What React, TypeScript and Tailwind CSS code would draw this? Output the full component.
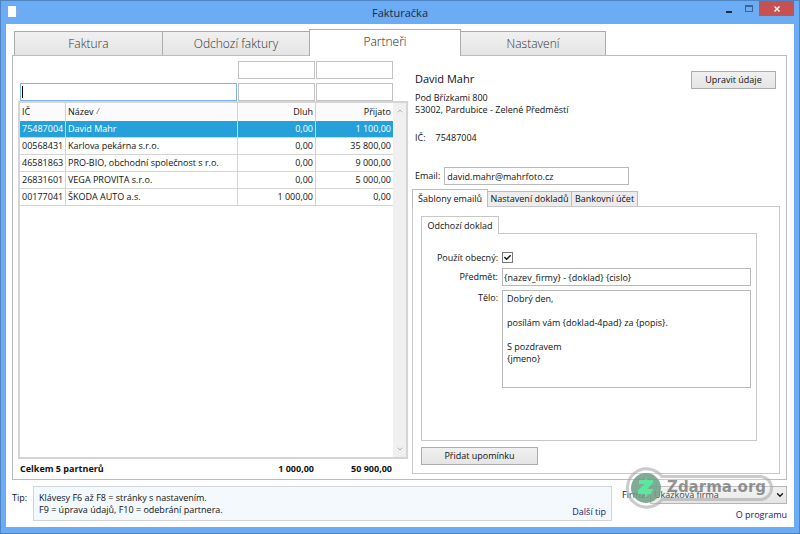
import React from "react";
import { FaCheck } from "react-icons/fa";
import { LuChevronDown, LuChevronUp } from "react-icons/lu";

const partners = [
  { ic: "75487004", name: "David Mahr", debt: "0,00", received: "1 100,00" },
  { ic: "00568431", name: "Karlova pekárna s.r.o.", debt: "0,00", received: "35 800,00" },
  { ic: "46581863", name: "PRO-BIO, obchodní společnost s r.o.", debt: "0,00", received: "9 000,00" },
  { ic: "26831601", name: "VEGA PROVITA s.r.o.", debt: "0,00", received: "5 000,00" },
  { ic: "00177041", name: "ŠKODA AUTO a.s.", debt: "1 000,00", received: "0,00" },
];

const emailBody = `Dobrý den,

posílám vám {doklad-4pad} za {popis}.

S pozdravem
{jmeno}`;

const TitleBar = () => {
  return (
    <header className="relative flex h-[23px] items-center justify-center">
      {/* Document icon */}
      <svg className="absolute left-0.5 top-[5px] h-3 w-3" viewBox="0 0 12 12">
        <rect width="8" height="11" fill="#fff" />
        <path d="M9.5 2.5v6M8.5 4h3M8.5 6.5h2.5" stroke="#a9a3b4" strokeWidth="1" fill="none" />
      </svg>
      <h1 className="text-[11px] leading-3 text-[#1c2a3f]">Fakturačka</h1>
      <div className="absolute right-0 top-0 flex">
        <button aria-label="Minimalizovat" className="flex h-[15px] w-5 items-end justify-center pb-[3px]">
          <span className="h-0.5 w-1.5 bg-[#1f2c40]" />
        </button>
        <button aria-label="Maximalizovat" className="flex h-[15px] w-5 items-center justify-center">
          <span className="h-[7px] w-2 border border-t-2 border-[#3f6390]" />
        </button>
        <button aria-label="Zavřít" className="flex h-[15px] w-[35px] items-center justify-center bg-[#c75050]">
          <svg className="h-1.5 w-1.5" viewBox="0 0 6 6">
            <path d="M.5.5l5 5M5.5.5l-5 5" stroke="#fff" strokeWidth="1.4" />
          </svg>
        </button>
      </div>
    </header>
  );
};

const MainTabs = () => {
  const tab = "h-6 border border-b-0 border-[#acacac] bg-gradient-to-b from-[#f0f0f0] to-[#e5e5e5] text-[#333]";
  return (
    <nav className="flex items-end pl-0.5 text-xs font-light">
      <button className={`${tab} w-[148px] border-r-0`}>Faktura</button>
      <button className={`${tab} w-[147px] border-r-0`}>Odchozí faktury</button>
      <button className="z-10 -mb-px h-[27px] w-[152px] border border-b-0 border-[#acacac] bg-white pb-0.5 text-[#222]">
        Partneři
      </button>
      <button className={`${tab} w-[145px] border-l-0`}>Nastavení</button>
    </nav>
  );
};

const PartnerList = () => {
  const box = "h-[18px] border border-[#c3c3c3] bg-white px-1 outline-none";
  const cell = "border-b border-r border-[#d4d4d4] px-0.5";
  return (
    <section className="flex w-[390px] shrink-0 flex-col">
      <div className="grid grid-cols-[217px_77px_77px] gap-x-px gap-y-1 pl-0.5 pt-[5px]">
        <input aria-label="Dluh od" className={`${box} col-start-2`} />
        <input aria-label="Přijato od" className={box} />
        <div className="relative">
          <input aria-label="Hledat" className="h-[18px] w-full border border-[#7eb4ea] bg-white px-1 outline-none" />
          {/* Text cursor */}
          <span className="absolute left-0.5 top-[3px] h-3 w-px bg-black" />
        </div>
        <input aria-label="Dluh do" className={box} />
        <input aria-label="Přijato do" className={box} />
      </div>

      <div className="flex flex-1 border-2 border-[#d5d5d5]">
        <div className="flex-1">
          <table className="w-full table-fixed border-separate border-spacing-0">
            <thead>
              <tr className="h-[18px] bg-[#fbfbfb] text-left">
                <th className="w-[46px] border-r border-[#d4d4d4] px-0.5 font-medium">IČ</th>
                <th className="w-[172px] border-r border-[#d4d4d4] px-0.5 font-medium">
                  Název
                  <svg className="mb-1 ml-0.5 inline h-1.5 w-1" viewBox="0 0 4 6">
                    <path d="M.5 6L3.5 0" stroke="#777" strokeWidth=".8" />
                  </svg>
                </th>
                <th className="w-[78px] border-r border-[#d4d4d4] px-0.5 text-right font-medium">Dluh</th>
                <th className="px-0.5 text-right font-medium">Přijato</th>
              </tr>
            </thead>
            <tbody>
              {partners.map((p, i) => (
                <tr key={p.ic} className={i === 0 ? "h-[17px] bg-[#26a0da] text-white" : "h-[17px]"}>
                  <td className={cell}>{p.ic}</td>
                  <td className={cell}>{p.name}</td>
                  <td className={`${cell} text-right`}>{p.debt}</td>
                  <td className="border-b border-[#d4d4d4] px-0.5 text-right">{p.received}</td>
                </tr>
              ))}
            </tbody>
          </table>
        </div>
        {/* Scrollbar */}
        <div className="flex w-[13px] flex-col items-center justify-between bg-[#f0f0f0] py-1 text-[#b0b0b0]">
          <LuChevronUp className="h-2 w-2" strokeWidth={3} />
          <LuChevronDown className="h-2 w-2" strokeWidth={3} />
        </div>
      </div>

      <div className="grid h-5 grid-cols-[216px_78px_78px] items-center pl-0.5 font-bold">
        <span>Celkem 5 partnerů</span>
        <span className="text-right">1 000,00</span>
        <span className="text-right">50 900,00</span>
      </div>
    </section>
  );
};

const EmailTemplates = () => {
  const field = "border border-[#b9b9b9] bg-white outline-none";
  return (
    <div className="flex flex-1 flex-col">
      <div className="flex items-end">
        <button className="z-10 -mb-px h-[18px] w-[76px] border border-b-0 border-[#bcbcbc] bg-white">Šablony emailů</button>
        <button className="h-[15px] w-[84px] border border-b-0 border-l-0 border-[#bcbcbc] bg-[#ececec]">Nastavení dokladů</button>
        <button className="h-[15px] w-[66px] border border-b-0 border-l-0 border-[#bcbcbc] bg-[#ececec]">Bankovní účet</button>
      </div>
      <div className="flex flex-1 flex-col border border-[#c8c8c8] pb-2 pl-2 pt-[9px]">
        <button className="z-10 -mb-px h-[18px] w-[78px] border border-b-0 border-[#c8c8c8] bg-white">Odchozí doklad</button>
        <div className="mr-[22px] flex-1 border border-[#c8c8c8] pr-[5px] pt-[18px]">
          <div className="grid grid-cols-[76px_1fr] gap-x-1 gap-y-1 text-right">
            <label htmlFor="general" className="leading-3">Použít obecný:</label>
            <span className="relative h-3 w-3">
              <input
                id="general"
                type="checkbox"
                defaultChecked
                className="block h-[11px] w-[11px] appearance-none border border-[#777] bg-white"
              />
              <FaCheck className="pointer-events-none absolute left-0.5 top-0.5 h-[7px] w-[7px]" />
            </span>
            <label htmlFor="subject" className="pt-[3px]">Předmět:</label>
            <input id="subject" className={`${field} h-[18px] px-px`} defaultValue="{nazev_firmy} - {doklad} {cislo}" />
            <label htmlFor="body" className="pt-0.5">Tělo:</label>
            <textarea id="body" className={`${field} h-[98px] resize-none px-1 py-0.5`} defaultValue={emailBody} />
          </div>
        </div>
        <button className="mt-1.5 h-[18px] w-[117px] border border-[#acacac] bg-gradient-to-b from-[#f0f0f0] to-[#e5e5e5]">
          Přidat upomínku
        </button>
      </div>
    </div>
  );
};

const PartnerDetail = () => {
  return (
    <section className="flex min-w-0 flex-1 flex-col pb-[5px]">
      <div className="flex items-start justify-between pl-[3px] pr-1 pt-[15px]">
        <div>
          <h2 className="text-[11px] leading-4">David Mahr</h2>
          <p className="pt-[5px]">
            Pod Břízkami 800
            <br />
            53002, Pardubice - Zelené Předměstí
          </p>
        </div>
        <button className="h-[18px] w-[85px] border border-[#acacac] bg-gradient-to-b from-[#f0f0f0] to-[#e5e5e5]">
          Upravit údaje
        </button>
      </div>
      <dl className="flex gap-2.5 pl-[3px] pt-4">
        <dt>IČ:</dt>
        <dd>75487004</dd>
      </dl>
      <div className="flex items-center gap-1 pb-1 pl-[3px] pt-[23px]">
        <label htmlFor="email">Email:</label>
        <input
          id="email"
          className="h-[18px] w-[185px] border border-[#b9b9b9] bg-white px-0.5 outline-none"
          defaultValue="david.mahr@mahrfoto.cz"
        />
      </div>
      <EmailTemplates />
    </section>
  );
};

const Footer = () => {
  return (
    <footer className="flex pt-1.5">
      <span className="w-[21px] pt-1.5">Tip:</span>
      <div className="flex flex-1 items-end justify-between border border-[#d0d5da] bg-[#f4f9fe] px-[5px] pb-1">
        <p>
          Klávesy F6 až F8 = stránky s nastavením.
          <br />
          F9 = úprava údajů, F10 = odebrání partnera.
        </p>
        <a href="#tip" className="-mb-0.5 text-[#191970]">Další tip</a>
      </div>
      <div className="relative ml-2.5 flex w-[165px] flex-col items-end">
        <div className="flex w-full items-center">
          <label htmlFor="company" className="w-7">Firma:</label>
          <div className="relative flex-1">
            <select
              id="company"
              className="block h-[18px] w-full appearance-none border border-[#b5b5b5] bg-gradient-to-b from-[#f0f0f0] to-[#e5e5e5] px-[3px]"
            >
              <option>Ukázková firma</option>
            </select>
            <LuChevronDown className="pointer-events-none absolute right-0.5 top-1 h-2.5 w-2.5" strokeWidth={3} />
          </div>
        </div>
        <a href="#about" className="pt-[5px] text-[#191970]">O programu</a>

        {/* Zdarma.org watermark */}
        <div className="pointer-events-none absolute -top-[19px] left-1 flex h-[42px] w-[149px] items-center">
          <svg className="absolute inset-0 h-full w-full" viewBox="0 0 149 42">
            <path
              d="M36 9.5H134a11.5 11.5 0 0 1 0 23H36A19.2 19.2 0 1 1 36 9.5Z"
              fill="#fff"
              fillOpacity=".2"
              stroke="#a8a8a8"
              strokeOpacity=".6"
              strokeWidth="3"
            />
            <circle cx="20" cy="21" r="15" fill="#6b9c84" fillOpacity=".85" />
            <path d="M13 13h6l2-2v2h6v3l-6 6h6l-2 5h-3l-3 4v-4h-7v-4l7-6h-6Z" fill="#5ce89c" />
          </svg>
          <span className="relative pb-0.5 pl-[41px] font-['DejaVu_Sans'] text-[15px] font-bold text-[#707070]/75">
            Zdarma.org
          </span>
        </div>
      </div>
    </footer>
  );
};

const App = () => {
  return (
    <div className="flex min-h-screen flex-col border border-[#4f84c4] bg-[#6cacf5] px-[5px] pb-1.5 font-['Open_Sans',sans-serif] text-[9px] leading-3 text-[#111]">
      <TitleBar />
      <div className="flex flex-1 flex-col bg-white pb-1.5 pl-1.5 pr-[7px] pt-[5px]">
        <MainTabs />
        <main className="flex flex-1 gap-1 border border-[#bcbcbc] pl-[5px] pr-1.5">
          <PartnerList />
          <PartnerDetail />
        </main>
        <Footer />
      </div>
    </div>
  );
};

export default App;
